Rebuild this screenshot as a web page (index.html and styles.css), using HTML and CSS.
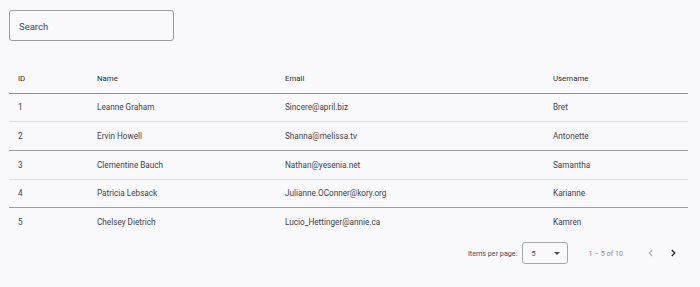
FILE: index.html
```html
<!DOCTYPE html>
<html lang="en">
<head>
    <meta charset="UTF-8">
    <meta name="viewport" content="width=device-width, initial-scale=1.0">
    <title>Users</title>
    <link rel="stylesheet" href="styles.css">
</head>
<body>
    <main class="page">
        <div class="search-field">
            <input class="search-input" type="text" placeholder="Search">
        </div>

        <table class="user-table">
            <thead>
                <tr>
                    <th class="col-id">ID</th>
                    <th class="col-name">Name</th>
                    <th class="col-email">Email</th>
                    <th class="col-user">Username</th>
                </tr>
            </thead>
            <tbody>
                <tr class="row-light">
                    <td>1</td>
                    <td>Leanne Graham</td>
                    <td>Sincere@april.biz</td>
                    <td>Bret</td>
                </tr>
                <tr class="row-dark">
                    <td>2</td>
                    <td>Ervin Howell</td>
                    <td>Shanna@melissa.tv</td>
                    <td>Antonette</td>
                </tr>
                <tr class="row-light">
                    <td>3</td>
                    <td>Clementine Bauch</td>
                    <td>Nathan@yesenia.net</td>
                    <td>Samantha</td>
                </tr>
                <tr class="row-dark">
                    <td>4</td>
                    <td>Patricia Lebsack</td>
                    <td>Julianne.OConner@kory.org</td>
                    <td>Karianne</td>
                </tr>
                <tr class="row-last">
                    <td>5</td>
                    <td>Chelsey Dietrich</td>
                    <td>Lucio_Hettinger@annie.ca</td>
                    <td>Kamren</td>
                </tr>
            </tbody>
        </table>

        <div class="paginator">
            <span class="page-label">Items per page:</span>
            <div class="page-select">
                <span>5</span>
                <span class="select-arrow"></span>
            </div>
            <span class="page-range">1 &ndash; 5 of 10</span>
            <div class="page-nav">
                <svg class="nav-btn nav-disabled" width="10" height="10" viewBox="0 0 10 10">
                    <path d="M6.2 2 L3.2 5 L6.2 8" fill="none" stroke="currentColor" stroke-width="1.2"/>
                </svg>
                <svg class="nav-btn" width="10" height="10" viewBox="0 0 10 10">
                    <path d="M3.8 2 L6.8 5 L3.8 8" fill="none" stroke="currentColor" stroke-width="1.2"/>
                </svg>
            </div>
        </div>
    </main>
</body>
</html>
```

FILE: styles.css
```css
* {
    padding: 0;
    margin: 0;
    box-sizing: border-box;
}

body {
    background-color: #f9f9fc;
    font-family: Roboto, "Liberation Sans", sans-serif;
    color: #1b1b1f;
    min-height: 100vh;
}

.page {
    padding: 10px 12px 0 9px;
}

.search-field {
    width: 165px;
    height: 31px;
    border: 1px solid #9a9aa2;
    border-radius: 3px;
    display: flex;
    align-items: center;
}

.search-input {
    border: none;
    background: transparent;
    outline: none;
    padding-left: 9px;
    padding-top: 1px;
    font-family: inherit;
    font-size: 9.5px;
    width: 100%;
    color: #45464f;
}

.search-input::placeholder {
    color: #45464f;
}

.user-table {
    width: 100%;
    margin-top: 18px;
    border-collapse: collapse;
    table-layout: fixed;
}

.user-table th,
.user-table td {
    text-align: left;
    padding-left: 9px;
    white-space: nowrap;
}

.user-table th {
    font-size: 7.8px;
    font-weight: 400;
    color: #2a2a30;
    height: 34px;
    padding-top: 6px;
    border-bottom: 1px solid #8f8f96;
}

.user-table td {
    font-size: 8.2px;
    color: #424249;
    height: 28.7px;
}

.col-id { width: 79px; }
.col-name { width: 188px; }
.col-email { width: 268px; }

.row-light td {
    border-bottom: 1px solid #dcdce2;
}

.row-dark td {
    border-bottom: 1px solid #9e9ea5;
}

.paginator {
    display: flex;
    align-items: center;
    justify-content: flex-end;
    height: 34px;
    margin-right: 7px;
    font-size: 7.2px;
    color: #45464f;
}

.page-label {
    margin-right: 5px;
}

.page-select {
    width: 46px;
    height: 22px;
    border: 1px solid #a5a5ac;
    border-radius: 3px;
    display: flex;
    align-items: center;
    justify-content: space-between;
    padding: 0 7px 0 8px;
}

.select-arrow {
    width: 0;
    height: 0;
    border-left: 3px solid transparent;
    border-right: 3px solid transparent;
    border-top: 3px solid #45464f;
}

.page-range {
    margin-left: 20px;
    color: #8a8a92;
}

.page-nav {
    display: flex;
    gap: 12px;
    margin-left: 23px;
    margin-right: 3px;
}

.nav-btn {
    color: #1b1b1f;
}

.nav-disabled {
    color: #b5b5bc;
}
```
